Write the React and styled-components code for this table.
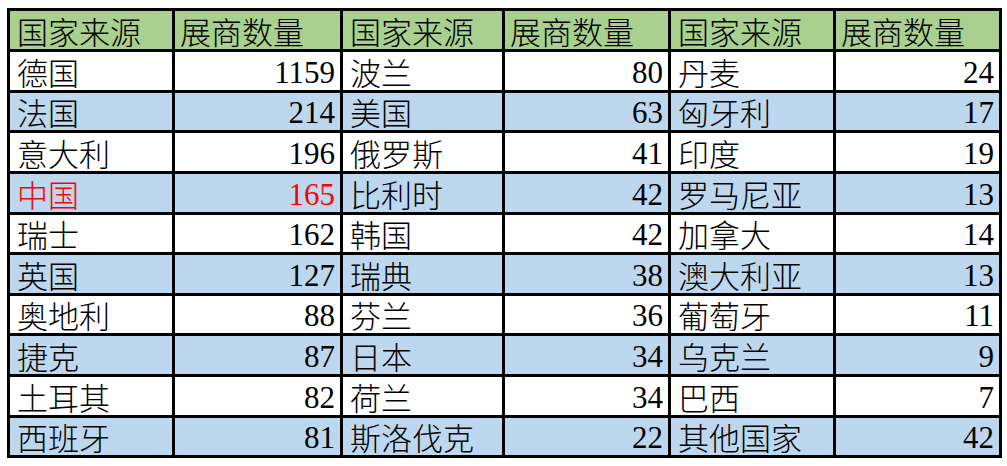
import React from "react";
import styled, { createGlobalStyle } from "styled-components";

const GlobalStyle = createGlobalStyle`
  html, body {
    margin: 0;
    padding: 0;
    background: #ffffff;
  }
`;

const HEADER_BG = "#a9d08e";
const BLUE_BG = "#bdd7ee";

const ROW_HEIGHTS = [38, 38, 37, 38, 38, 37, 38, 37, 38, 38, 37];

const groups = [
  [
    ["德国", 1159],
    ["法国", 214],
    ["意大利", 196],
    ["中国", 165, true],
    ["瑞士", 162],
    ["英国", 127],
    ["奥地利", 88],
    ["捷克", 87],
    ["土耳其", 82],
    ["西班牙", 81],
  ],
  [
    ["波兰", 80],
    ["美国", 63],
    ["俄罗斯", 41],
    ["比利时", 42],
    ["韩国", 42],
    ["瑞典", 38],
    ["芬兰", 36],
    ["日本", 34],
    ["荷兰", 34],
    ["斯洛伐克", 22],
  ],
  [
    ["丹麦", 24],
    ["匈牙利", 17],
    ["印度", 19],
    ["罗马尼亚", 13],
    ["加拿大", 14],
    ["澳大利亚", 13],
    ["葡萄牙", 11],
    ["乌克兰", 9],
    ["巴西", 7],
    ["其他国家", 42],
  ],
];

const Page = styled.div`
  padding: 8px 0 0 7px;
`;

const Table = styled.div`
  display: grid;
  width: 995px;
  grid-template-columns: 162px 165px 159px 163px 162px 163px;
  grid-template-rows: ${ROW_HEIGHTS.map((h) => `${h}px`).join(" ")};
  gap: 3px;
  padding: 3px;
  box-sizing: border-box;
  background: #000000;
`;

const Cell = styled.div`
  display: flex;
  align-items: flex-end;
  justify-content: ${(p) => (p.$num ? "flex-end" : "flex-start")};
  padding: ${(p) => (p.$num ? "0 5px 3px 0" : `0 0 1px ${p.$head ? 5 : 7}px`)};
  background: ${(p) => p.$bg};
  color: ${(p) => (p.$red ? "#ff0000" : "#000000")};
  font-family: ${(p) =>
    p.$num
      ? `"Liberation Serif", "DejaVu Serif", "Times New Roman", serif`
      : `"Noto Sans CJK SC", "Noto Sans", sans-serif`};
  font-size: 31px;
  font-weight: ${(p) => (p.$num ? 400 : 300)};
  line-height: ${(p) => (p.$num ? "28px" : "34px")};
  white-space: nowrap;
`;

export default function App() {
  const rows = [];
  for (let i = 0; i < 10; i++) rows.push(groups.map((g) => g[i]));

  return (
    <Page>
      <GlobalStyle />
      <Table>
        {groups.map((_, gi) => (
          <React.Fragment key={`h${gi}`}>
            <Cell $bg={HEADER_BG}>国家来源</Cell>
            <Cell $bg={HEADER_BG} $head>
              展商数量
            </Cell>
          </React.Fragment>
        ))}
        {rows.map((row, ri) => {
          const bg = ri % 2 === 1 ? BLUE_BG : "#ffffff";
          return row.map(([name, count, red], gi) => (
            <React.Fragment key={`${ri}-${gi}`}>
              <Cell $bg={bg} $red={red}>
                {name}
              </Cell>
              <Cell $bg={bg} $red={red} $num>
                {count}
              </Cell>
            </React.Fragment>
          ));
        })}
      </Table>
    </Page>
  );
}
